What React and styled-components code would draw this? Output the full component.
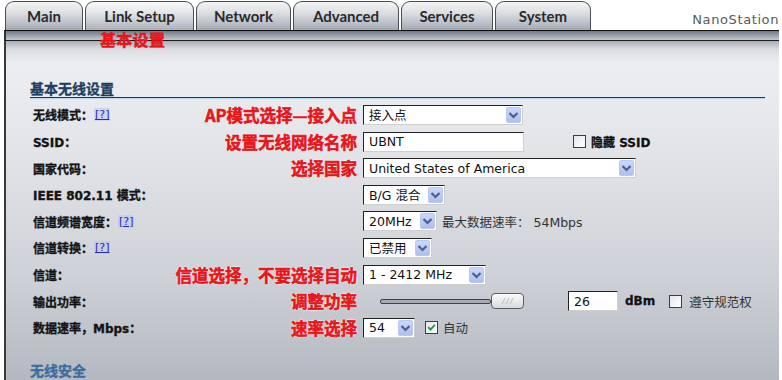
import React from "react";
import styled, { createGlobalStyle } from "styled-components";

const GlobalStyle = createGlobalStyle`
  html, body {
    margin: 0;
    padding: 0;
    background: #fff;
    overflow: hidden;
  }
  body {
    font-family: "DejaVu Sans", "Noto Sans CJK SC", sans-serif;
  }
`;

const tabs = [
  { name: "Main", width: 78 },
  { name: "Link Setup", width: 109, active: true },
  { name: "Network", width: 95 },
  { name: "Advanced", width: 106 },
  { name: "Services", width: 92 },
  { name: "System", width: 96 },
];

const Page = styled.div`
  position: relative;
  width: 775px;
  margin-left: 4px;
  height: 380px;
  display: flex;
  flex-direction: column;
`;

const TabBar = styled.div`
  display: flex;
  align-items: flex-end;
  height: 30px;
  padding-left: 1px;
  border-bottom: 1px solid #111;
`;

const Tab = styled.div`
  width: ${(p) => p.$width}px;
  height: 29px;
  margin-right: 2px;
  box-sizing: border-box;
  border: 1px solid #4a4e54;
  border-bottom: none;
  border-radius: 9px 9px 0 0;
  background: ${(p) =>
    p.$active
      ? "linear-gradient(#f9f9f9 0%, #e6e8eb 35%, #c3c8cf 75%, #aab0b9 100%)"
      : "linear-gradient(#f3f3f3 0%, #dfe1e4 35%, #bcc1c8 75%, #a2a8b1 100%)"};
  font-family: Lato, "DejaVu Sans", sans-serif;
  font-weight: 700;
  font-size: 15px;
  color: #2a2a2a;
  text-align: center;
  line-height: 29px;
`;

const Brand = styled.div`
  margin-left: auto;
  align-self: flex-end;
  padding-bottom: 3px;
  font-family: "DejaVu Sans", sans-serif;
  font-size: 13px;
  letter-spacing: 0.6px;
  color: #5a5a5a;
`;

const Band = styled.div`
  height: 9px;
  background: linear-gradient(#6f7886, #9aa1ad 50%, #c4c8cf);
  border-bottom: 1px solid #1c1c1c;
  border-left: 2px solid #333;
`;

const Panel = styled.div`
  flex: 1;
  border-left: 2px solid #3a3a3a;
  padding: 39px 14px 0 27px;
  background: linear-gradient(
    #a9aeb7 0px,
    #d9dce0 8px,
    #eceef1 22px,
    #e2e4e8 110px,
    #cfd2d8 230px,
    #b4b8c0 339px
  );
`;

const Overlay = styled.div`
  position: absolute;
  left: 96px;
  top: 30px;
  font-family: "Noto Sans CJK SC", sans-serif;
  font-weight: 700;
  font-size: 16px;
  line-height: 18px;
  color: #e8141b;
  -webkit-text-stroke: 0.5px #e8141b;
  letter-spacing: 0.3px;
`;

const SectionTitle = styled.div`
  margin-left: -3px;
  font-family: "Noto Sans CJK SC", sans-serif;
  font-weight: 700;
  font-size: 14px;
  line-height: 16px;
  color: ${(p) => p.$color || "#1b3d60"};
  -webkit-text-stroke: 0.3px ${(p) => p.$color || "#1b3d60"};
  padding-bottom: 1px;
  border-bottom: ${(p) => (p.$line ? "1px solid #1d3b58" : "none")};
  box-shadow: ${(p) => (p.$line ? "0 1px 0 #b5d6ef" : "none")};
  margin-top: ${(p) => p.$top || 0}px;
`;

const Rows = styled.div`
  margin-top: 3.7px;
`;

const Row = styled.div`
  display: grid;
  grid-template-columns: 135px 195px 1fr;
  align-items: center;
  height: 26.6px;
`;

const Label = styled.div`
  font-family: "DejaVu Sans", "Noto Sans CJK SC", sans-serif;
  font-weight: 700;
  font-size: 12px;
  color: #141414;
  -webkit-text-stroke: 0.35px #141414;
  white-space: nowrap;
  display: flex;
  align-items: center;
`;

const Help = styled.span`
  margin-left: 1px;
  font-family: "DejaVu Sans", sans-serif;
  font-weight: 400;
  font-size: 11px;
  color: #2b2bb0;
  -webkit-text-stroke: 0;
  text-decoration: underline;
  background: rgba(190, 196, 240, 0.55);
  padding: 0 1px;
`;

const Note = styled.div`
  justify-self: end;
  padding-right: 6px;
  white-space: nowrap;
  font-family: "Noto Sans CJK SC", sans-serif;
  font-weight: 700;
  font-size: 16.5px;
  color: #e5161c;
  -webkit-text-stroke: 0.6px #e5161c;
  text-shadow: 0 0 2px #fff, 0 0 2px #fff, 0 0 1px #fff;
`;

const Control = styled.div`
  display: flex;
  align-items: center;
  white-space: nowrap;
  font-family: "DejaVu Sans", "Noto Sans CJK SC", sans-serif;
  font-size: 12px;
  color: #222;
`;

const Field = styled.div`
  width: ${(p) => p.$width}px;
  height: 20px;
  box-sizing: border-box;
  display: flex;
  align-items: center;
  background: #fff;
  border: 1px solid;
  border-color: #222 #cfcfcf #cfcfcf #222;
  padding-left: 5px;
  font-family: "DejaVu Sans", "Noto Sans CJK SC", sans-serif;
  font-size: 12.5px;
  color: #111;
  margin-left: ${(p) => p.$ml || 0}px;
`;

const FieldText = styled.span`
  flex: 1;
  overflow: hidden;
`;

const Arrow = styled.span`
  width: 15px;
  height: 16px;
  margin-right: 1px;
  box-sizing: border-box;
  border: 1px solid #b8c9f0;
  border-radius: 2px;
  background: linear-gradient(#cbd8fb, #aebfee);
  display: flex;
  align-items: center;
  justify-content: center;
`;

const Select = ({ width, children }) => (
  <Field $width={width}>
    <FieldText>{children}</FieldText>
    <Arrow>
      <svg width="11" height="8" viewBox="0 0 11 8">
        <path d="M1.5 2 L5.5 6 L9.5 2" fill="none" stroke="#4a5f8a" strokeWidth="2.2" />
      </svg>
    </Arrow>
  </Field>
);

const Box = styled.span`
  width: 13px;
  height: 13px;
  box-sizing: border-box;
  border: 1px solid #3b3f45;
  background: linear-gradient(135deg, #e3e6ea, #ffffff);
  margin-left: ${(p) => p.$ml || 0}px;
  margin-right: 5px;
  display: inline-flex;
  align-items: center;
  justify-content: center;
`;

const Check = ({ checked, ml }) => (
  <Box $ml={ml}>
    {checked && (
      <svg width="9" height="9" viewBox="0 0 9 9">
        <path d="M1.2 4.2 L3.5 6.6 L7.8 1.8" fill="none" stroke="#1f9a2c" strokeWidth="1.8" />
      </svg>
    )}
  </Box>
);

const Bold = styled.span`
  font-weight: 700;
  color: #111;
  -webkit-text-stroke: 0.3px #111;
  margin-left: ${(p) => p.$ml || 0}px;
`;

const Muted = styled.span`
  color: #333;
  font-size: 12.5px;
  margin-left: ${(p) => p.$ml || 0}px;
`;

const Track = styled.span`
  margin-left: 17px;
  width: 111px;
  height: 5px;
  box-sizing: border-box;
  border: 1px solid #3e4247;
  border-radius: 2px;
  background: #a8acb2;
`;

const Thumb = styled.span`
  width: 33px;
  height: 16px;
  box-sizing: border-box;
  border: 1px solid #5b5f64;
  border-radius: 4px;
  background: linear-gradient(#fafafa, #d9dadc);
  display: flex;
  align-items: center;
  justify-content: center;
`;

const rows = [
  {
    label: "无线模式：",
    help: true,
    note: "AP模式选择—接入点",
    control: <Select width={160}>接入点</Select>,
  },
  {
    label: "SSID：",
    note: "设置无线网络名称",
    control: (
      <>
        <Field $width={161}>UBNT</Field>
        <Check ml={49} />
        <Bold>隐藏 SSID</Bold>
      </>
    ),
  },
  {
    label: "国家代码：",
    note: "选择国家",
    control: <Select width={273}>United States of America</Select>,
  },
  {
    label: "IEEE 802.11 模式：",
    control: <Select width={82}>B/G 混合</Select>,
  },
  {
    label: "信道频谱宽度：",
    help: true,
    control: (
      <>
        <Select width={74}>20MHz</Select>
        <Muted $ml={5}>最大数据速率： 54Mbps</Muted>
      </>
    ),
  },
  {
    label: "信道转换：",
    help: true,
    control: <Select width={69}>已禁用</Select>,
  },
  {
    label: "信道：",
    note: "信道选择，不要选择自动",
    control: <Select width={123}>1 - 2412 MHz</Select>,
  },
  {
    label: "输出功率：",
    note: "调整功率",
    control: (
      <>
        <Track />
        <Thumb>
          <svg width="16" height="8" viewBox="0 0 16 8">
            <path d="M2 7 L5 1 M6 7 L9 1 M10 7 L13 1" stroke="#b9bbbf" strokeWidth="1" />
          </svg>
        </Thumb>
        <Field $width={50} $ml={44}>26</Field>
        <Bold $ml={7}>dBm</Bold>
        <Check ml={14} />
        <Muted $ml={2}>遵守规范权</Muted>
      </>
    ),
  },
  {
    label: "数据速率，Mbps：",
    note: "速率选择",
    control: (
      <>
        <Select width={52}>54</Select>
        <Check checked ml={10} />
        <Muted>自动</Muted>
      </>
    ),
  },
];

export default function App() {
  return (
    <>
      <GlobalStyle />
      <Page>
        <TabBar>
          {tabs.map((t) => (
            <Tab key={t.name} $width={t.width} $active={t.active}>
              {t.name}
            </Tab>
          ))}
          <Brand>NanoStation</Brand>
        </TabBar>
        <Band />
        <Panel>
          <SectionTitle $line>基本无线设置</SectionTitle>
          <Rows>
            {rows.map((r) => (
              <Row key={r.label}>
                <Label>
                  {r.label}
                  {r.help && <Help>[?]</Help>}
                </Label>
                <Note>{r.note}</Note>
                <Control>{r.control}</Control>
              </Row>
            ))}
          </Rows>
          <SectionTitle $top={21} $color="#3c6c9e">
            无线安全
          </SectionTitle>
        </Panel>
        <Overlay>基本设置</Overlay>
      </Page>
    </>
  );
}
